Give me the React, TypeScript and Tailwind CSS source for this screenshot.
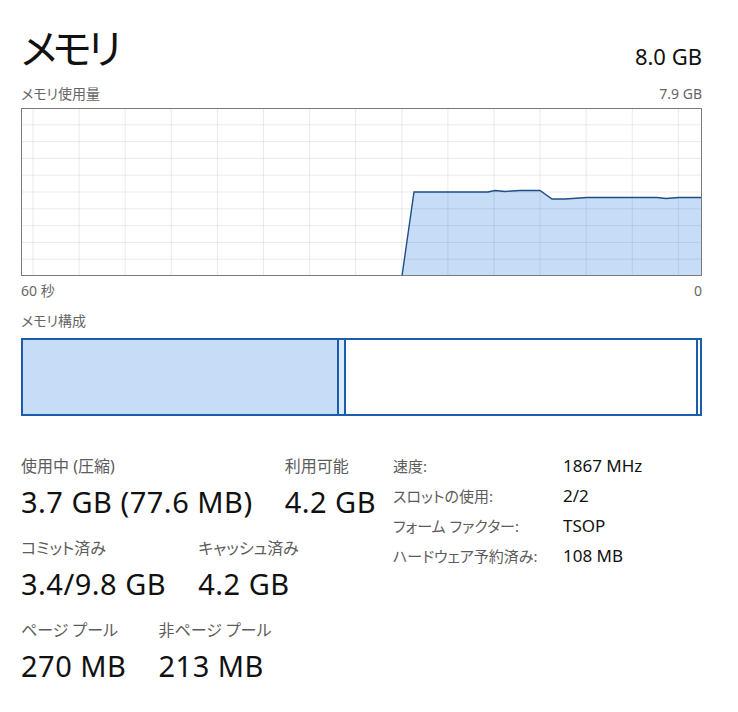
const font = { fontFamily: '"Noto Sans", "Noto Sans CJK JP", sans-serif' };

const W = 681;
const H = 168;
const vLines = Array.from({ length: 15 }, (_, i) => 12 + i * 46.1);
const hLines = Array.from({ length: 9 }, (_, i) => (i + 1) * 16.8);
const pts: [number, number][] = [
  [381, 168],
  [393, 84],
  [467, 84],
  [474, 82.5],
  [484, 83.5],
  [499, 82.5],
  [519, 82.5],
  [531, 91],
  [544, 91],
  [566, 89.5],
  [636, 89.5],
  [645, 90.5],
  [658, 89.5],
  [681, 89.5],
];

function UsageGraph() {
  const line = pts.map(([x, y], i) => `${i ? "L" : "M"}${x} ${y}`).join(" ");
  const area = `${line} L${W} ${H} Z`;
  return (
    <svg width={W} height={H} viewBox={`0 0 ${W} ${H}`} className="block">
      <rect x={0} y={0} width={W} height={H} fill="#ffffff" />
      <path d={area} fill="#c7ddf7" />
      {vLines.map((x) => (
        <line key={x} x1={x} y1={0} x2={x} y2={H} stroke="#1e3f66" strokeOpacity={0.1} strokeWidth={1} />
      ))}
      {hLines.map((y) => (
        <line key={y} x1={0} y1={y} x2={W} y2={y} stroke="#1e3f66" strokeOpacity={0.1} strokeWidth={1} />
      ))}
      <path d={line} fill="none" stroke="#1f4d88" strokeWidth={1.4} />
      <rect x={0.5} y={0.5} width={W - 1} height={H - 1} fill="none" stroke="#7a7a7a" strokeWidth={1} />
    </svg>
  );
}

function Stat({ label, value }: { label: string; value: string }) {
  return (
    <div className="flex flex-col">
      <div className="text-[16px] leading-[20px] text-[#5c5c5c] [font-feature-settings:'palt']">{label}</div>
      <div className="mt-[10px] text-[29px] leading-[32px] tracking-[0.5px] text-[#111]">{value}</div>
    </div>
  );
}

const specs = [
  ["速度:", "1867 MHz"],
  ["スロットの使用:", "2/2"],
  ["フォーム ファクター:", "TSOP"],
  ["ハードウェア予約済み:", "108 MB"],
];

export default function App() {
  return (
    <div className="h-[712px] w-[738px] bg-white pl-[21px] pr-[36px]" style={font}>
      <div className="flex items-end justify-between pt-[24px]">
        <div className="text-[41px] leading-[48px] tracking-[-4px] text-[#111] [font-feature-settings:'palt']">メモリ</div>
        <div className="pb-[3px] text-[22px] leading-[26px] text-[#111]">8.0 GB</div>
      </div>
      <div className="mt-[14px] flex justify-between text-[14px] leading-[16px] text-[#666] [font-feature-settings:'palt']">
        <span>メモリ使用量</span>
        <span>7.9 GB</span>
      </div>
      <div className="mt-[6px]">
        <UsageGraph />
      </div>
      <div className="mt-[7px] flex justify-between text-[14px] leading-[16px] text-[#666]">
        <span>60 秒</span>
        <span>0</span>
      </div>
      <div className="mt-[14px] text-[14px] leading-[16px] text-[#666] [font-feature-settings:'palt']">メモリ構成</div>
      <div className="mt-[9px] flex h-[78px] w-[681px]">
        <div className="w-[318px] border-2 border-[#1b5cab] bg-[#c7ddf7]" />
        <div className="-ml-[2px] w-[9px] border-2 border-[#1b5cab] bg-[#dcebfb]" />
        <div className="-ml-[2px] flex-1 border-2 border-[#1b5cab] bg-white" />
        <div className="-ml-[2px] w-[6px] border-2 border-[#1b5cab] bg-white" />
      </div>
      <div className="mt-[40px] flex">
        <div className="flex w-[372px] flex-col gap-[20px]">
          <div className="flex gap-[32px]">
            <Stat label="使用中 (圧縮)" value="3.7 GB (77.6 MB)" />
            <Stat label="利用可能" value="4.2 GB" />
          </div>
          <div className="flex gap-[32px]">
            <Stat label="コミット済み" value="3.4/9.8 GB" />
            <Stat label="キャッシュ済み" value="4.2 GB" />
          </div>
          <div className="flex gap-[32px]">
            <Stat label="ページ プール" value="270 MB" />
            <Stat label="非ページ プール" value="213 MB" />
          </div>
        </div>
        <div className="flex flex-col gap-[10px]">
          {specs.map(([k, v]) => (
            <div key={k} className="flex items-center leading-[20px]">
              <span className="w-[170px] text-[15px] text-[#5c5c5c] [font-feature-settings:'palt']">{k}</span>
              <span className="text-[17px] text-[#111]">{v}</span>
            </div>
          ))}
        </div>
      </div>
    </div>
  );
}
